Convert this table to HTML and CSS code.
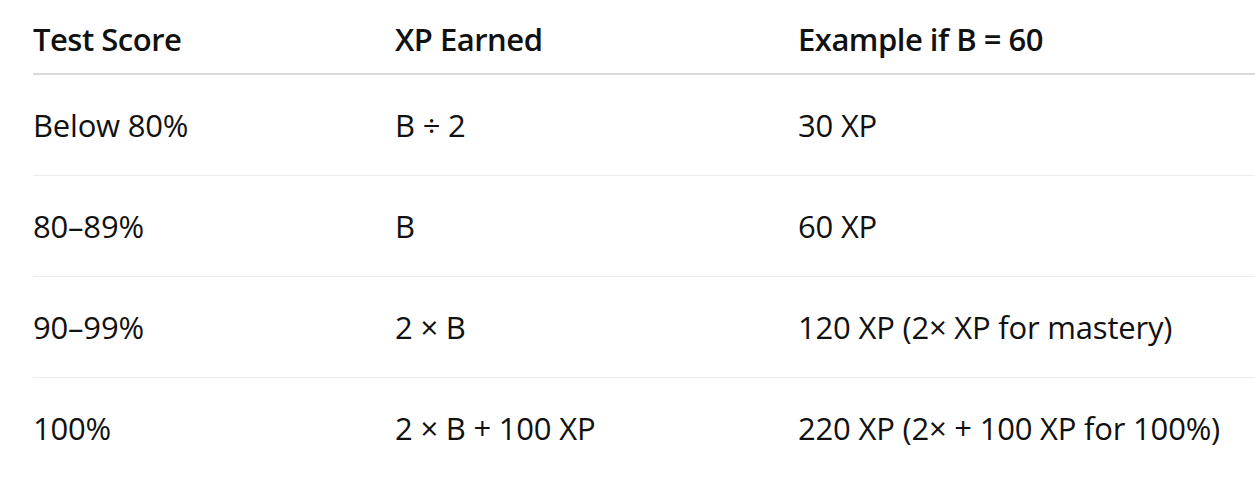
FILE: index.html
```html
<!DOCTYPE html>
<html lang="en">
<head>
<meta charset="utf-8">
<link rel="stylesheet" href="styles.css">
</head>
<body>
<div class="wrap">
<table class="xp-table">
  <colgroup>
    <col class="c1"><col class="c2"><col class="c3">
  </colgroup>
  <thead>
    <tr><th>Test Score</th><th>XP Earned</th><th>Example if B = 60</th></tr>
  </thead>
  <tbody>
    <tr><td>Below 80%</td><td>B ÷ 2</td><td>30 XP</td></tr>
    <tr><td>80–89%</td><td>B</td><td>60 XP</td></tr>
    <tr><td>90–99%</td><td>2 × B</td><td>120 XP (2× XP for mastery)</td></tr>
    <tr><td>100%</td><td>2 × B + 100 XP</td><td>220 XP (2× + 100 XP for 100%)</td></tr>
  </tbody>
</table>
</div>
</body>
</html>
```
FILE: styles.css
```css
html, body {
  margin: 0;
  padding: 0;
  background: #ffffff;
}
.wrap {
  padding-left: 33px;
}
.xp-table {
  width: 1222px;
  border-collapse: collapse;
  table-layout: fixed;
  font-family: "Open Sans", "Noto Sans", sans-serif;
  font-size: 31px;
  line-height: 46px;
  color: #111111;
}
.c1 { width: 362px; }
.c2 { width: 403px; }
.c3 { width: auto; }
.xp-table th {
  text-align: left;
  font-weight: 600;
  letter-spacing: -0.5px;
  padding: 16px 0 11px 0;
  border-bottom: 2px solid #d9d9d9;
  white-space: nowrap;
}
.xp-table td {
  padding: 27px 0 27px 0;
  border-bottom: 1px solid #ececec;
  white-space: nowrap;
  letter-spacing: -0.2px;
}
.xp-table tbody tr:last-child td {
  border-bottom: none;
}
```
